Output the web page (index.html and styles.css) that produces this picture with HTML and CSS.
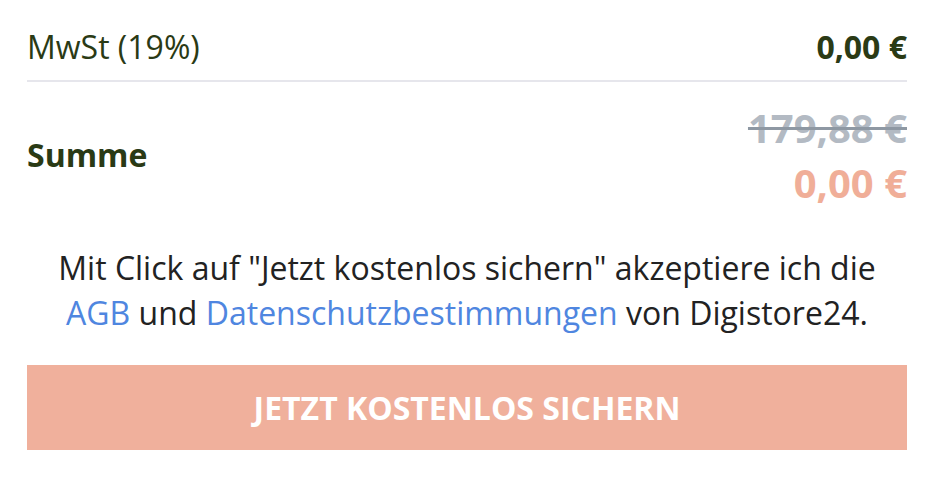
FILE: index.html
```html
<!DOCTYPE html>
<html lang="de">
<head>
    <meta charset="UTF-8">
    <meta name="viewport" content="width=device-width, initial-scale=1.0">
    <title>Bestellübersicht</title>
    <link rel="stylesheet" href="styles.css">
</head>
<body>
    <div class="summary">
        <!-- MwSt -->
        <div class="row row-tax">
            <span class="label">MwSt (19%)</span>
            <span class="amount">0,00 €</span>
        </div>

        <!-- Summe -->
        <div class="row row-total">
            <span class="label label-bold">Summe</span>
            <div class="prices">
                <span class="price-old">179,88 €</span>
                <span class="price-new">0,00 €</span>
            </div>
        </div>

        <p class="terms">
            Mit Click auf "Jetzt kostenlos sichern" akzeptiere ich die
            <a href="#">AGB</a> und <a href="#">Datenschutzbestimmungen</a> von Digistore24.
        </p>

        <button class="btn-order">JETZT KOSTENLOS SICHERN</button>
    </div>
</body>
</html>
```

FILE: styles.css
```css
* {
    margin: 0;
    padding: 0;
    box-sizing: border-box;
}

body {
    font-family: 'Open Sans', 'Liberation Sans', sans-serif;
    background: white;
    color: #222;
}

.summary {
    padding: 0 29px 0 27px;
}

.row {
    display: flex;
    justify-content: space-between;
    align-items: center;
}

.row-tax {
    padding: 23px 0 9px;
    border-bottom: 2px solid #e6e6ec;
}

.label {
    font-size: 32px;
    line-height: 48px;
    color: #2a3a15;
}

.label-bold {
    font-weight: bold;
}

.amount {
    font-size: 32px;
    line-height: 48px;
    font-weight: bold;
    color: #2a3a15;
}

.row-total {
    margin-top: 18px;
}

.prices {
    display: flex;
    flex-direction: column;
    align-items: flex-end;
}

.price-old {
    font-size: 40px;
    line-height: 55px;
    font-weight: bold;
    color: #b3bac3;
    text-decoration: line-through;
    text-decoration-color: #8e98a3;
    text-decoration-thickness: 3px;
}

.price-new {
    font-size: 40px;
    line-height: 55px;
    font-weight: bold;
    color: #f0ae98;
}

.terms {
    margin-top: 35px;
    font-size: 32px;
    line-height: 45px;
    text-align: center;
    color: #222;
}

.terms a {
    color: #4f86e0;
    text-decoration: none;
}

.btn-order {
    display: block;
    width: 100%;
    height: 85px;
    margin-top: 30px;
    background: #f0b09c;
    border: none;
    color: white;
    font-family: 'Open Sans', 'Liberation Sans', sans-serif;
    font-size: 32px;
    font-weight: bold;
    cursor: pointer;
}
```
